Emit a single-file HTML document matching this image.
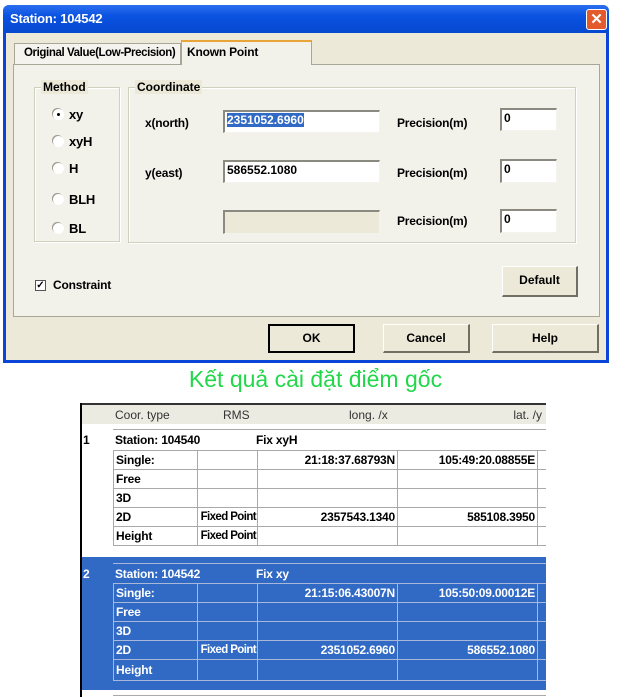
<!DOCTYPE html>
<html><head><meta charset="utf-8"><style>
*{margin:0;padding:0;box-sizing:border-box}
body{width:631px;height:697px;background:#fff;position:relative;overflow:hidden;font-family:"Liberation Sans",sans-serif;font-size:12px}
.a{position:absolute}
.b{font-weight:bold;color:#000;letter-spacing:-0.2px;white-space:nowrap}
.inp{position:absolute;background:#fff;border-top:2px solid #8a8a80;border-left:2px solid #8a8a80;border-right:1px solid #f4f3ee;border-bottom:1px solid #f4f3ee;font-weight:bold;padding:1px 2px;font-size:12px}
.grp{position:absolute;border:1px solid #d0d0bf;box-shadow:inset 1px 1px 0 #fff,1px 1px 0 #fff}
.leg{position:absolute;top:-8px;background:#ece9d8;padding:0 2px;font-weight:bold}
.btn{position:absolute;background:#ece9d8;border:1px solid #fff;border-right:2px solid #716f64;border-bottom:2px solid #716f64;text-align:center;font-weight:bold}
.rad{position:absolute;width:11px;height:11px;border-radius:50%;background:#fff;box-shadow:-1px -1px 0 #9a9a90}
.tbl{position:absolute;border-collapse:collapse;font-weight:bold;font-size:12px;letter-spacing:-0.2px;table-layout:fixed}
.tbl td{border:1px solid #a9a9a9;height:19px;padding:0 2px;white-space:nowrap;overflow:hidden}
.tbl td.fp{padding:0 1px;letter-spacing:-0.6px;font-size:11.5px}
.w td{border-color:#a9b8d8}
.r{text-align:right}
</style></head><body>
<div class="a" style="left:3px;top:5px;width:606px;height:358px;background:#0a45d8;border-radius:6px 6px 0 0"></div>
<div class="a" style="left:3px;top:5px;width:606px;height:28px;background:linear-gradient(#2b6ff0,#0a52e0 40%,#0648d0);border-radius:6px 6px 0 0"></div>
<div class="a b" style="left:10px;top:11px;color:#fff;font-size:13px">Station: 104542</div>
<div class="a" style="left:586px;top:9px;width:21px;height:21px;background:#e35a2c;border:1px solid #fff;border-radius:3px;color:#fff;font-weight:bold;font-size:15px;text-align:center;line-height:19px">✕</div>
<div class="a" style="left:6px;top:33px;width:600px;height:327px;background:#ece9d8"></div>
<div class="a" style="left:13px;top:64px;width:587px;height:253px;border:1px solid #a9a698;background:#f2f1ea"></div>
<div class="a b" style="left:14px;top:43px;width:167px;height:21px;border:1px solid #a9a698;border-bottom:none;background:#f4f3ee;padding:3px 0 0 9px;font-size:11.5px;letter-spacing:-0.4px">Original Value(Low-Precision)</div>
<div class="a b" style="left:181px;top:40px;width:131px;height:25px;border:1px solid #a9a698;border-bottom:none;border-top:2px solid #e8a53a;background:#f2f1ea;padding:3px 0 0 5px;z-index:2">Known Point</div>
<div class="grp" style="left:34px;top:87px;width:86px;height:155px"><div class="leg" style="left:6px">Method</div></div>
<div class="rad" style="left:53px;top:109px"><div class="a" style="left:4px;top:4px;width:3px;height:3px;background:#000;border-radius:50%"></div></div>
<div class="a b" style="left:69px;top:107px;font-size:13px">xy</div>
<div class="rad" style="left:53px;top:136px"></div><div class="a b" style="left:69px;top:134px;font-size:13px">xyH</div>
<div class="rad" style="left:53px;top:163px"></div><div class="a b" style="left:69px;top:161px;font-size:13px">H</div>
<div class="rad" style="left:53px;top:194px"></div><div class="a b" style="left:69px;top:192px;font-size:13px">BLH</div>
<div class="rad" style="left:53px;top:223px"></div><div class="a b" style="left:69px;top:221px;font-size:13px">BL</div>
<div class="grp" style="left:128px;top:87px;width:448px;height:156px"><div class="leg" style="left:6px">Coordinate</div></div>
<div class="a b" style="left:145px;top:116px">x(north)</div>
<div class="a b" style="left:145px;top:166px">y(east)</div>
<div class="inp" style="left:223px;top:110px;width:157px;height:23px"><span style="background:#316ac5;color:#fff">2351052.6960</span></div>
<div class="inp" style="left:223px;top:160px;width:157px;height:23px">586552.1080</div>
<div class="inp" style="left:223px;top:210px;width:157px;height:24px;background:#ece9d8"></div>
<div class="a b" style="left:397px;top:116px">Precision(m)</div>
<div class="a b" style="left:397px;top:166px">Precision(m)</div>
<div class="a b" style="left:397px;top:214px">Precision(m)</div>
<div class="inp" style="left:500px;top:108px;width:57px;height:23px">0</div>
<div class="inp" style="left:500px;top:159px;width:57px;height:24px">0</div>
<div class="inp" style="left:500px;top:209px;width:57px;height:24px">0</div>
<div class="a" style="left:35px;top:280px;width:11px;height:11px;background:#fff;border:1px solid #555;font-size:10px;line-height:9px;text-align:center;font-weight:bold">✓</div>
<div class="a b" style="left:53px;top:278px">Constraint</div>
<div class="btn" style="left:502px;top:266px;width:76px;height:31px;line-height:27px">Default</div>
<div class="btn" style="left:268px;top:324px;width:87px;height:29px;line-height:25px;border:2px solid #000">OK</div>
<div class="btn" style="left:383px;top:324px;width:87px;height:29px;line-height:26px">Cancel</div>
<div class="btn" style="left:492px;top:324px;width:107px;height:29px;line-height:26px">Help</div>
<div class="a" style="left:0;width:631px;top:366px;text-align:center;color:#22d84a;font-size:23px;font-family:'Liberation Sans','DejaVu Sans',sans-serif">Kết quả cài đặt điểm gốc</div>
<div class="a" style="left:80px;top:403px;width:466px;height:2px;background:#333"></div>
<div class="a" style="left:80px;top:403px;width:2px;height:294px;background:#000"></div>
<div class="a" style="left:82px;top:405px;width:464px;height:19px;background:#ecebe2;color:#333;font-size:12px">
<span class="a" style="left:33px;top:3px">Coor. type</span><span class="a" style="left:141px;top:3px">RMS</span><span class="a" style="left:267px;top:3px">long. /x</span><span class="a" style="right:4px;top:3px">lat. /y</span></div>
<div class="a" style="left:113px;top:429px;width:433px;height:1px;background:#a9a9a9"></div>
<div class="a b" style="left:83px;top:433px">1</div>
<div class="a b" style="left:115px;top:433px">Station: 104540</div>
<div class="a b" style="left:256px;top:433px">Fix xyH</div>
<table class="tbl" style="left:113px;top:450px;width:440px">
<colgroup><col style="width:84px"><col style="width:60px"><col style="width:140px"><col style="width:140px"><col style="width:16px"></colgroup>
<tr><td>Single:</td><td></td><td class="r">21:18:37.68793N</td><td class="r">105:49:20.08855E</td><td></td></tr>
<tr><td>Free</td><td></td><td></td><td></td><td></td></tr>
<tr><td>3D</td><td></td><td></td><td></td><td></td></tr>
<tr><td>2D</td><td class="r fp">Fixed Point</td><td class="r">2357543.1340</td><td class="r">585108.3950</td><td></td></tr>
<tr><td>Height</td><td class="r fp">Fixed Point</td><td></td><td></td><td></td></tr>
</table>
<div class="a" style="left:82px;top:557px;width:464px;height:133px;background:#316ac5"></div>
<div class="a" style="left:113px;top:563px;width:433px;height:1px;background:#a9b8d8"></div>
<div class="a b" style="left:83px;top:567px;color:#fff">2</div>
<div class="a b" style="left:115px;top:567px;color:#fff">Station: 104542</div>
<div class="a b" style="left:256px;top:567px;color:#fff">Fix xy</div>
<table class="tbl w" style="left:113px;top:583px;width:440px;color:#fff">
<colgroup><col style="width:84px"><col style="width:60px"><col style="width:140px"><col style="width:140px"><col style="width:16px"></colgroup>
<tr><td>Single:</td><td></td><td class="r">21:15:06.43007N</td><td class="r">105:50:09.00012E</td><td></td></tr>
<tr><td>Free</td><td></td><td></td><td></td><td></td></tr>
<tr><td>3D</td><td></td><td></td><td></td><td></td></tr>
<tr><td>2D</td><td class="r fp">Fixed Point</td><td class="r">2351052.6960</td><td class="r">586552.1080</td><td></td></tr>
<tr><td style="height:21px">Height</td><td></td><td></td><td></td><td></td></tr>
</table>
<div class="a" style="left:546px;top:400px;width:85px;height:297px;background:#fff"></div>
<div class="a" style="left:113px;top:695px;width:433px;height:1px;background:#a9a9a9"></div>
</body></html>
